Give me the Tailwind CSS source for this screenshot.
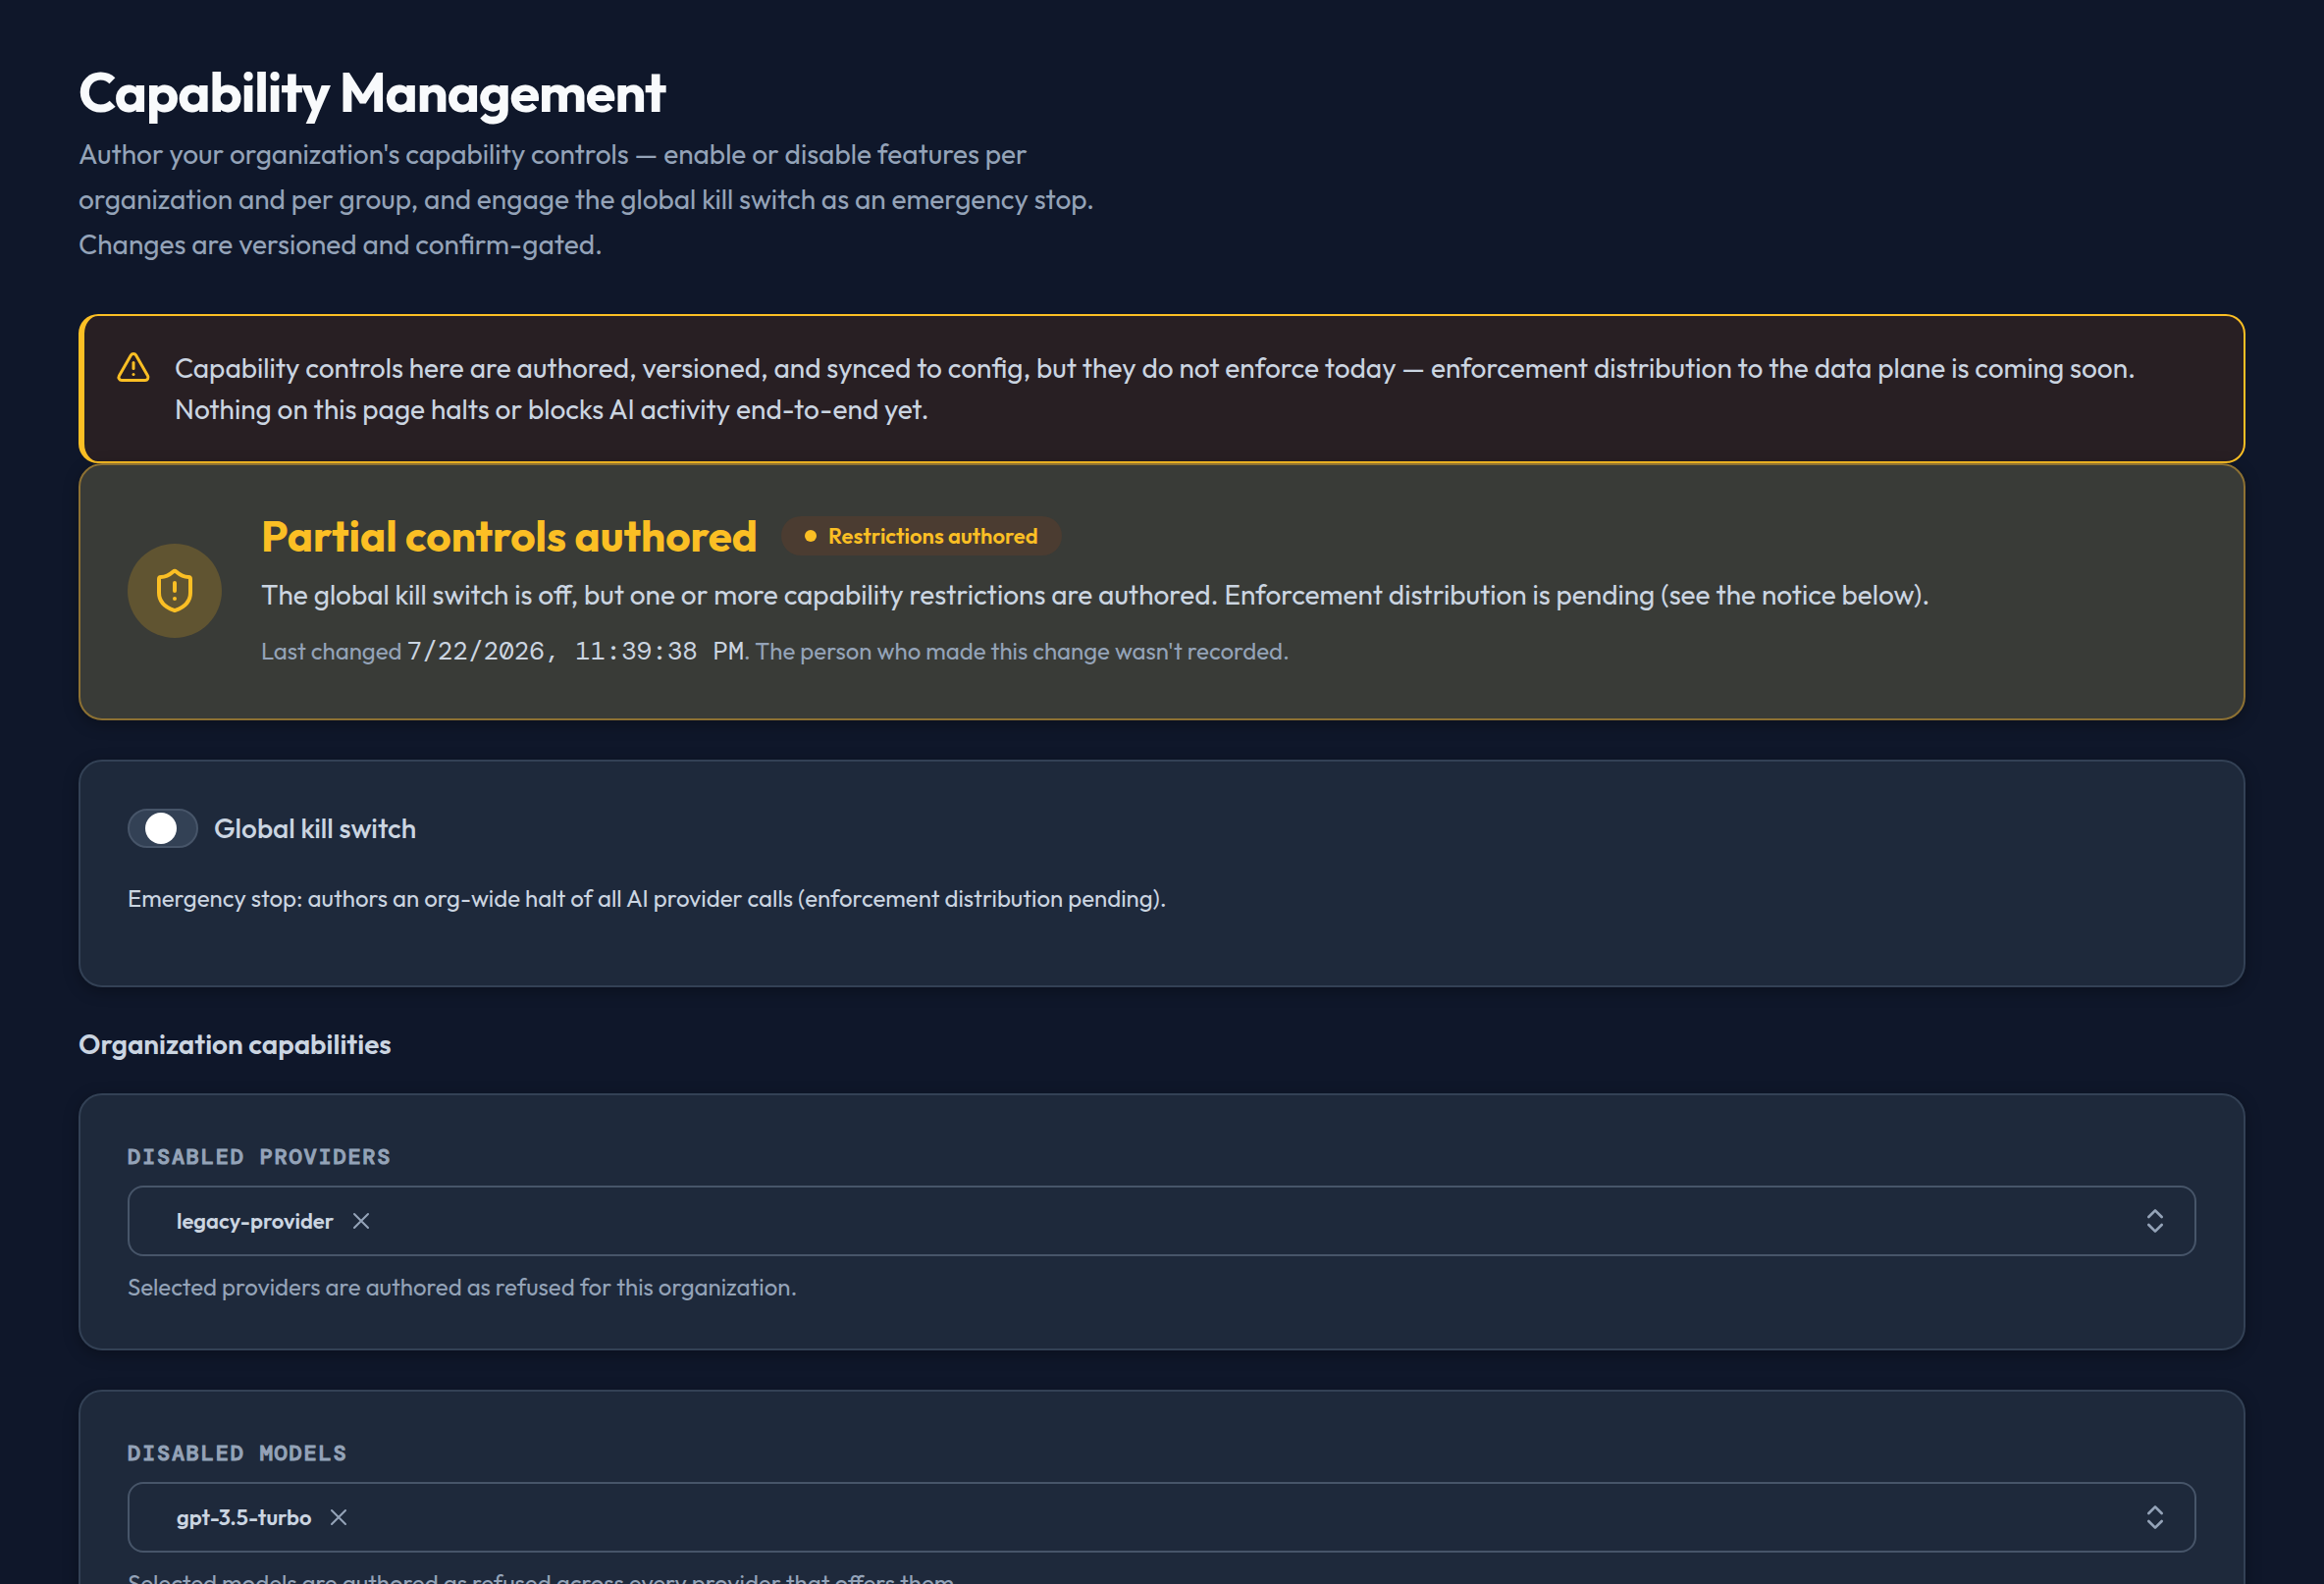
<!DOCTYPE html>
<html lang="en">

<head>
  <meta charset="UTF-8">
  <meta name="viewport" content="width=device-width, initial-scale=1.0">
  <title>Capability Management</title>
  <script src="https://cdn.jsdelivr.net/npm/@tailwindcss/browser@4"></script>
</head>

<body class="min-h-screen bg-[#0f172a] px-20 pt-16 pb-20 font-['Outfit','Lato',sans-serif] text-[28px] text-[#cbd5e1]">
  <header class="mb-12">
    <h1 class="text-[56px] leading-[60px] font-bold text-[#f8fafc] tracking-[-0.02em]">Capability Management</h1>
    <p class="mt-2.5 max-w-[1060px] leading-[46px] text-[#94a3b8]">
      Author your organization's capability controls — enable or disable features per organization and per group, and
      engage the global kill switch as an emergency stop. Changes are versioned and confirm-gated.
    </p>
  </header>

  <main>
    <div role="note" class="flex gap-6 rounded-[20px] border-2 border-l-[6px] border-[#fbbf24] bg-[#281f23] p-8">
      <svg class="mt-0.5 size-9 shrink-0 text-[#fbbf24]" viewBox="0 0 24 24" fill="none" stroke="currentColor"
        stroke-width="2" stroke-linecap="round" stroke-linejoin="round">
        <path d="m21.73 18-8-14a2 2 0 0 0-3.48 0l-8 14A2 2 0 0 0 4 21h16a2 2 0 0 0 1.73-3" />
        <path d="M12 9v4" />
        <path d="M12 17h.01" />
      </svg>
      <p class="leading-[42px]">
        Capability controls here are authored, versioned, and synced to config, but they do not enforce today —
        enforcement distribution to the data plane is coming soon. Nothing on this page halts or blocks AI activity
        end-to-end yet.
      </p>
    </div>

    <section class="flex items-center gap-10 rounded-3xl border-2 border-[#8d7133] bg-[#393b37] p-12 pb-[50px] shadow-[0_4px_16px_rgba(0,0,0,0.3)]">
      <div class="flex size-24 shrink-0 items-center justify-center rounded-full bg-[#605431]">
        <svg class="size-12 text-[#fbbf24]" viewBox="0 0 24 24" fill="none" stroke="currentColor" stroke-width="2"
          stroke-linecap="round" stroke-linejoin="round">
          <path
            d="M20 13c0 5-3.500 7.500-7.660 8.950a1 1 0 0 1-.670-.010C7.500 20.500 4 18 4 13V6a1 1 0 0 1 1-1c2 0 4.500-1.200 6.240-2.720a1.170 1.170 0 0 1 1.520 0C14.510 3.810 17 5 19 5a1 1 0 0 1 1 1z" />
          <path d="M12 8v4" />
          <path d="M12 16h.01" />
        </svg>
      </div>
      <div>
        <div class="flex items-center gap-6">
          <h2 class="text-[44px] leading-[48px] font-bold text-[#fbbf24]">Partial controls authored</h2>
          <span class="flex h-10 items-center gap-3 rounded-full bg-[#4b3c31] px-6 text-[22px] font-semibold text-[#fbbf24]">
            <span class="size-3 rounded-full bg-[#fbbf24]"></span>
            Restrictions authored
          </span>
        </div>
        <p class="mt-3.5 leading-[44px]">
          The global kill switch is off, but one or more capability restrictions are authored. Enforcement distribution
          is pending (see the notice below).
        </p>
        <p class="mt-4 text-[24px] leading-[38px] text-[#94a3b8]">
          Last changed <time class="font-['DM_Mono','Liberation_Mono',monospace] text-[26px] leading-none text-[#cbd5e1]">7/22/2026, 11:39:38 PM</time>. The
          person who made this change wasn't recorded.
        </p>
      </div>
    </section>

    <section class="mt-10 rounded-3xl border-2 border-[#334155] bg-[#1e293b] p-12 pb-[70px] shadow-[0_4px_16px_rgba(0,0,0,0.3)]">
      <div class="flex items-center gap-4">
        <input id="kill-switch" type="checkbox" role="switch"
          class="flex h-10 w-[72px] shrink-0 appearance-none items-center rounded-full border-2 border-[#475569] bg-[#334155] px-4 before:size-8 before:rounded-full before:bg-white checked:justify-end checked:bg-[#fbbf24]">
        <label for="kill-switch" class="leading-[40px] font-medium">Global kill switch</label>
      </div>
      <p class="mt-8 text-[24px] leading-[38px]">
        Emergency stop: authors an org-wide halt of all AI provider calls (enforcement distribution pending).
      </p>
    </section>

    <h2 class="mt-10 leading-[36px] font-semibold">Organization capabilities</h2>

    <section class="mt-8 rounded-3xl border-2 border-[#334155] bg-[#1e293b] p-12 shadow-[0_4px_16px_rgba(0,0,0,0.3)]">
      <label for="disabled-providers"
        class="block font-['DM_Mono','Liberation_Mono',monospace] text-[22px] leading-[30px] font-bold tracking-[0.08em] text-[#94a3b8] uppercase [-webkit-text-stroke:1px_#94a3b8]">Disabled
        providers</label>
      <div class="mt-3.5 flex h-[72px] items-center gap-5 rounded-2xl border-2 border-[#475569] pr-6 pl-12">
        <span class="flex items-center gap-3.5 text-[22px] font-semibold">
          legacy-provider
          <button type="button" aria-label="Remove legacy-provider" class="text-[#94a3b8]">
            <svg class="size-7" viewBox="0 0 24 24" fill="none" stroke="currentColor" stroke-width="1.75"
              stroke-linecap="round">
              <path d="M18 6 6 18M6 6l12 12" />
            </svg>
          </button>
        </span>
        <input id="disabled-providers" type="text" class="min-w-0 flex-1 outline-none">
        <button type="button" aria-label="Show providers" class="text-[#94a3b8]">
          <svg class="size-8" viewBox="0 0 24 24" fill="none" stroke="currentColor" stroke-width="2"
            stroke-linecap="round" stroke-linejoin="round">
            <path d="m7 15 5 5 5-5" />
            <path d="m7 9 5-5 5 5" />
          </svg>
        </button>
      </div>
      <p class="mt-4 text-[24px] leading-[30px] text-[#94a3b8]">Selected providers are authored as refused for this
        organization.</p>
    </section>

    <section class="mt-10 rounded-3xl border-2 border-[#334155] bg-[#1e293b] p-12 shadow-[0_4px_16px_rgba(0,0,0,0.3)]">
      <label for="disabled-models"
        class="block font-['DM_Mono','Liberation_Mono',monospace] text-[22px] leading-[30px] font-bold tracking-[0.08em] text-[#94a3b8] uppercase [-webkit-text-stroke:1px_#94a3b8]">Disabled
        models</label>
      <div class="mt-3.5 flex h-[72px] items-center gap-5 rounded-2xl border-2 border-[#475569] pr-6 pl-12">
        <span class="flex items-center gap-3.5 text-[22px] font-semibold">
          gpt-3.5-turbo
          <button type="button" aria-label="Remove gpt-3.5-turbo" class="text-[#94a3b8]">
            <svg class="size-7" viewBox="0 0 24 24" fill="none" stroke="currentColor" stroke-width="1.75"
              stroke-linecap="round">
              <path d="M18 6 6 18M6 6l12 12" />
            </svg>
          </button>
        </span>
        <input id="disabled-models" type="text" class="min-w-0 flex-1 outline-none">
        <button type="button" aria-label="Show models" class="text-[#94a3b8]">
          <svg class="size-8" viewBox="0 0 24 24" fill="none" stroke="currentColor" stroke-width="2"
            stroke-linecap="round" stroke-linejoin="round">
            <path d="m7 15 5 5 5-5" />
            <path d="m7 9 5-5 5 5" />
          </svg>
        </button>
      </div>
      <p class="mt-4 text-[24px] leading-[30px] text-[#94a3b8]">Selected models are authored as refused across every
        provider that offers them.</p>
    </section>
  </main>
</body>

</html>
